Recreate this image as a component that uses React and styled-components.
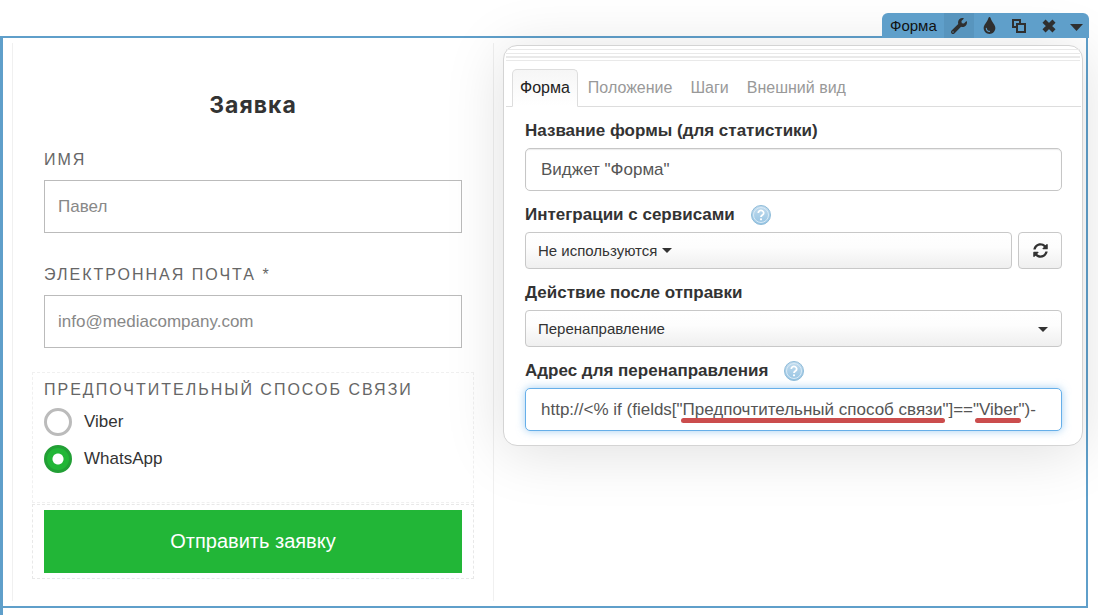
import React, { useState } from 'react'
import styled, { createGlobalStyle, css } from 'styled-components'
import { FaWrench, FaTint, FaSyncAlt } from 'react-icons/fa'

const TABS = ['Форма', 'Положение', 'Шаги', 'Внешний вид']
const MESSENGERS = ['Viber', 'WhatsApp']

const CopyIcon = () => (
  <svg width="16" height="16" viewBox="0 0 16 16" fill="none" stroke="currentColor" strokeWidth="2">
    <path d="M5 9H2V2h7v3" />
    <path d="M6 6h8v8H6z" />
  </svg>
)

const CrossIcon = () => (
  <svg width="14" height="14" viewBox="0 0 14 14" fill="none" stroke="currentColor" strokeWidth="4.4">
    <path d="M2 2.2l10 9.6M12 2.2L2 11.8" />
  </svg>
)

const Caret = ({ width = 10, height = 5 }) => (
  <svg width={width} height={height} viewBox="0 0 10 5" preserveAspectRatio="none" fill="currentColor">
    <path d="M0 0h10L5 5z" />
  </svg>
)

const HelpIcon = () => (
  <svg width="20" height="20" viewBox="0 0 20 20">
    <defs>
      <linearGradient id="help" x1="0" y1="0" x2="0" y2="1">
        <stop offset="0" stopColor="#c3dcee" />
        <stop offset="1" stopColor="#96c4e3" />
      </linearGradient>
    </defs>
    <circle cx="10" cy="10" r="9.5" fill="url(#help)" stroke="#8fbcd9" />
    <circle cx="10" cy="10" r="7.5" fill="none" stroke="#d9eaf6" />
    <path d="M7.3 8a2.7 2.5 0 1 1 4.2 2c-1 .7-1.5 1-1.5 2" fill="none" stroke="#fff" strokeWidth="1.8" />
    <circle cx="10" cy="14.3" r="1.1" fill="#fff" />
  </svg>
)

const App = () => {
  const [tab, setTab] = useState('Форма')
  const [messenger, setMessenger] = useState('WhatsApp')

  return (
    <Page>
      <GlobalStyle />
      <ToolbarRow>
        <Toolbar>
          <ToolbarTitle>Форма</ToolbarTitle>
          <ToolButton aria-label="Настройки" $active><FaWrench size={16} /></ToolButton>
          <ToolButton aria-label="Цвет"><FaTint size={17} /></ToolButton>
          <ToolButton aria-label="Копировать"><CopyIcon /></ToolButton>
          <ToolButton aria-label="Удалить"><CrossIcon /></ToolButton>
          <MoreButton aria-label="Ещё"><Caret width={13} height={7} /></MoreButton>
        </Toolbar>
      </ToolbarRow>

      <Canvas>
        <Frame>
          <FormColumn onSubmit={(e) => e.preventDefault()}>
            <Title>Заявка</Title>
            <Block>
              <BlockLabel htmlFor="name">ИМЯ</BlockLabel>
              <TextInput id="name" type="text" placeholder="Павел" />
            </Block>
            <Block>
              <BlockLabel htmlFor="email">ЭЛЕКТРОННАЯ ПОЧТА *</BlockLabel>
              <TextInput id="email" type="email" placeholder="info@mediacompany.com" />
            </Block>
            <RadioBlock role="radiogroup" aria-labelledby="messenger">
              <RadioCaption as="div" id="messenger">ПРЕДПОЧТИТЕЛЬНЫЙ СПОСОБ СВЯЗИ</RadioCaption>
              <RadioList>
                {MESSENGERS.map((m) => (
                  <RadioRow key={m}>
                    <Radio
                      type="radio"
                      name="messenger"
                      checked={messenger === m}
                      onChange={() => setMessenger(m)}
                    />
                    {m}
                  </RadioRow>
                ))}
              </RadioList>
            </RadioBlock>
            <SubmitBlock>
              <Submit type="submit">Отправить заявку</Submit>
            </SubmitBlock>
          </FormColumn>

          <Panel>
            <Grip />
            <Tabs role="tablist">
              {TABS.map((t) => (
                <Tab key={t} type="button" role="tab" aria-selected={t === tab} $active={t === tab} onClick={() => setTab(t)}>
                  {t}
                </Tab>
              ))}
            </Tabs>
            <Settings>
              <Setting>
                <SettingLabel htmlFor="title">Название формы (для статистики)</SettingLabel>
                <SettingInput id="title" type="text" defaultValue={'Виджет "Форма"'} />
              </Setting>
              <Setting>
                <SettingLabel htmlFor="services">Интеграции с сервисами <HelpIcon /></SettingLabel>
                <Controls>
                  <DropButton id="services" type="button">Не используются <Caret /></DropButton>
                  <RefreshButton type="button" aria-label="Обновить"><FaSyncAlt size={15} /></RefreshButton>
                </Controls>
              </Setting>
              <Setting>
                <SettingLabel htmlFor="action">Действие после отправки</SettingLabel>
                <SelectBox>
                  <Select id="action">
                    <option>Перенаправление</option>
                  </Select>
                  <Caret />
                </SelectBox>
              </Setting>
              <Setting>
                <SettingLabel htmlFor="url">Адрес для перенаправления <HelpIcon /></SettingLabel>
                <Marked>
                  <SettingInput
                    id="url"
                    type="text"
                    $focused
                    defaultValue={'http://<% if (fields["Предпочтительный способ связи"]=="Viber")-'}
                  />
                  <Underline $left={156} $width={264} />
                  <Underline $left={450} $width={46} />
                </Marked>
              </Setting>
            </Settings>
          </Panel>
        </Frame>
      </Canvas>
    </Page>
  )
}

const GlobalStyle = createGlobalStyle`
  *, *::before, *::after {
    box-sizing: border-box;
  }
  body {
    margin: 0;
    background: #fff;
    color: #333;
    font-family: "Liberation Sans", Arial, sans-serif;
  }
  button, input, select {
    font-family: inherit;
    color: inherit;
    margin: 0;
  }
`

const Page = styled.div`
  min-height: 100vh;
  display: flex;
  flex-direction: column;
  overflow: hidden;
`

const ToolbarRow = styled.header`
  display: flex;
  justify-content: flex-end;
  padding: 13px 9px 0 0;
  position: relative;
  z-index: 1;
`

const Toolbar = styled.div`
  display: flex;
  height: 23px;
  padding-left: 8px;
  background: #5f9fca;
  border-radius: 6px 6px 0 0;
  box-shadow: 0 2px 0 #5f9fca;
`

const ToolbarTitle = styled.span`
  width: 54px;
  font-size: 15px;
  line-height: 26px;
  color: #111;
`

const ToolButton = styled.button`
  display: flex;
  align-items: center;
  justify-content: center;
  width: 30px;
  height: 25px;
  padding: 0;
  border: 0;
  background: ${({ $active }) => ($active ? '#5895be' : 'transparent')};
  color: #2f2f2f;
  cursor: pointer;
`

const MoreButton = styled(ToolButton)`
  width: 25px;
  padding-top: 3px;
`

const Canvas = styled.main`
  flex: 1;
  border-left: 3px solid #5f9fca;
  padding-right: 10px;
`

const Frame = styled.div`
  display: grid;
  grid-template-columns: 482fr 580fr;
  column-gap: 9px;
  align-items: start;
  padding: 5px 3px 5px 9px;
  border: 2px solid #5f9fca;
  border-left: 0;
`

const FormColumn = styled.form`
  padding: 49px 19px 22px;
  border: solid #f0f0f0;
  border-width: 0 1px;
`

const Title = styled.h1`
  margin: 0 0 24px;
  font-family: Inter, "Liberation Sans", sans-serif;
  font-size: 23px;
  font-weight: 700;
  line-height: 26px;
  letter-spacing: 1px;
  text-align: center;
`

const Block = styled.div`
  padding: 7px 11px 23px;
  border: 1px solid transparent;
`

const RadioBlock = styled(Block)`
  margin-bottom: 1px;
  padding-bottom: 29px;
  border: 1px dashed #f0f0f0;
`

const SubmitBlock = styled(Block)`
  padding: 5px 11px;
  border: 1px dashed #e8e8e8;
`

const BlockLabel = styled.label`
  display: block;
  margin-bottom: 10px;
  font-size: 16px;
  line-height: 20px;
  letter-spacing: 2px;
  color: #666;
`

const RadioCaption = styled(BlockLabel)`
  margin-bottom: 8px;
`

const TextInput = styled.input`
  display: block;
  width: 100%;
  height: 53px;
  padding: 0 13px;
  border: 1px solid #bbb;
  border-radius: 0;
  background: #fff;
  font-size: 17px;
  &::placeholder {
    color: #888;
    opacity: 1;
  }
`

const RadioList = styled.div`
  display: flex;
  flex-direction: column;
  gap: 9px;
`

const RadioRow = styled.label`
  display: flex;
  align-items: center;
  gap: 12px;
  font-size: 17px;
  line-height: 28px;
`

const Radio = styled.input`
  appearance: none;
  width: 28px;
  height: 28px;
  margin: 0;
  border: 3px solid #bbb;
  border-radius: 50%;
  background: #fff;
  &:checked {
    border-color: #229f35;
    background: radial-gradient(circle, #fff 5px, #22b637 6px);
  }
`

const Submit = styled.button`
  display: block;
  width: 100%;
  height: 63px;
  border: 0;
  background: #22b637;
  color: #fff;
  font-size: 20px;
  cursor: pointer;
`

const Panel = styled.section`
  position: relative;
  margin-top: 2px;
  padding: 0 1px;
  border: 1px solid #d4d4d4;
  border-radius: 14px;
  background: #fff;
  box-shadow: 0 6px 60px rgba(0, 0, 0, 0.13);
`

const Grip = styled.div`
  height: 23px;
  margin: 0 1px;
  background: linear-gradient(
    transparent 3px, #e9e9e9 3px 4px,
    transparent 4px 7px, #e9e9e9 7px 8px,
    transparent 8px 10px, #e9e9e9 10px 12px,
    transparent 12px 14px, #e9e9e9 14px 15px,
    transparent 15px
  );
`

const Tabs = styled.div`
  display: flex;
  gap: 2px;
  margin-left: 1px;
  padding-left: 6px;
  border-bottom: 1px solid #ddd;
`

const Tab = styled.button`
  height: 38px;
  margin-bottom: -1px;
  padding: 0 7px;
  border: 1px solid transparent;
  border-radius: 5px 5px 0 0;
  background: transparent;
  color: #999;
  font-size: 16px;
  cursor: pointer;
  ${({ $active }) => $active && css`
    border-color: #ddd;
    border-bottom-color: #fff;
    background: linear-gradient(#f6f6f6, #fff);
    color: #222;
  `}
`

const Settings = styled.div`
  display: flex;
  flex-direction: column;
  gap: 12px;
  padding: 12px 19px 14px 20px;
`

const Setting = styled.div`
  display: flex;
  flex-direction: column;
  gap: 5px;
`

const SettingLabel = styled.label`
  display: flex;
  align-items: center;
  gap: 16px;
  font-size: 17px;
  font-weight: 700;
  line-height: 24px;
`

const SettingInput = styled.input`
  display: block;
  width: 100%;
  height: 43px;
  padding: 0 15px;
  border: 1px solid ${({ $focused }) => ($focused ? '#66afe9' : '#c6c6c6')};
  border-radius: 5px;
  outline: 0;
  background: #fff;
  box-shadow: ${({ $focused }) =>
    $focused ? '0 0 8px rgba(102, 175, 233, 0.6)' : 'inset 0 1px 1px rgba(0, 0, 0, 0.08)'};
  color: #555;
  font-size: 17px;
`

const Controls = styled.div`
  display: flex;
  gap: 6px;
`

const buttonFace = css`
  height: 37px;
  border: 1px solid #c8c8c8;
  border-radius: 4px;
  background: linear-gradient(#fff, #fdfdfd 40%, #efefef);
  color: #333;
  font-size: 15px;
  cursor: pointer;
`

const DropButton = styled.button`
  ${buttonFace}
  flex: 1;
  display: flex;
  align-items: center;
  gap: 5px;
  padding: 0 12px;
`

const RefreshButton = styled.button`
  ${buttonFace}
  display: flex;
  align-items: center;
  justify-content: center;
  width: 44px;
  padding: 0;
`

const SelectBox = styled.div`
  position: relative;
  svg {
    position: absolute;
    top: 17px;
    right: 14px;
    pointer-events: none;
  }
`

const Select = styled.select`
  ${buttonFace}
  appearance: none;
  display: block;
  width: 100%;
  padding: 0 12px;
`

const Marked = styled.div`
  position: relative;
`

const Underline = styled.span`
  position: absolute;
  top: 30px;
  left: ${({ $left }) => $left}px;
  width: ${({ $width }) => $width}px;
  height: 5px;
  border-radius: 3px;
  background: #cb4d4d;
`

export default App
